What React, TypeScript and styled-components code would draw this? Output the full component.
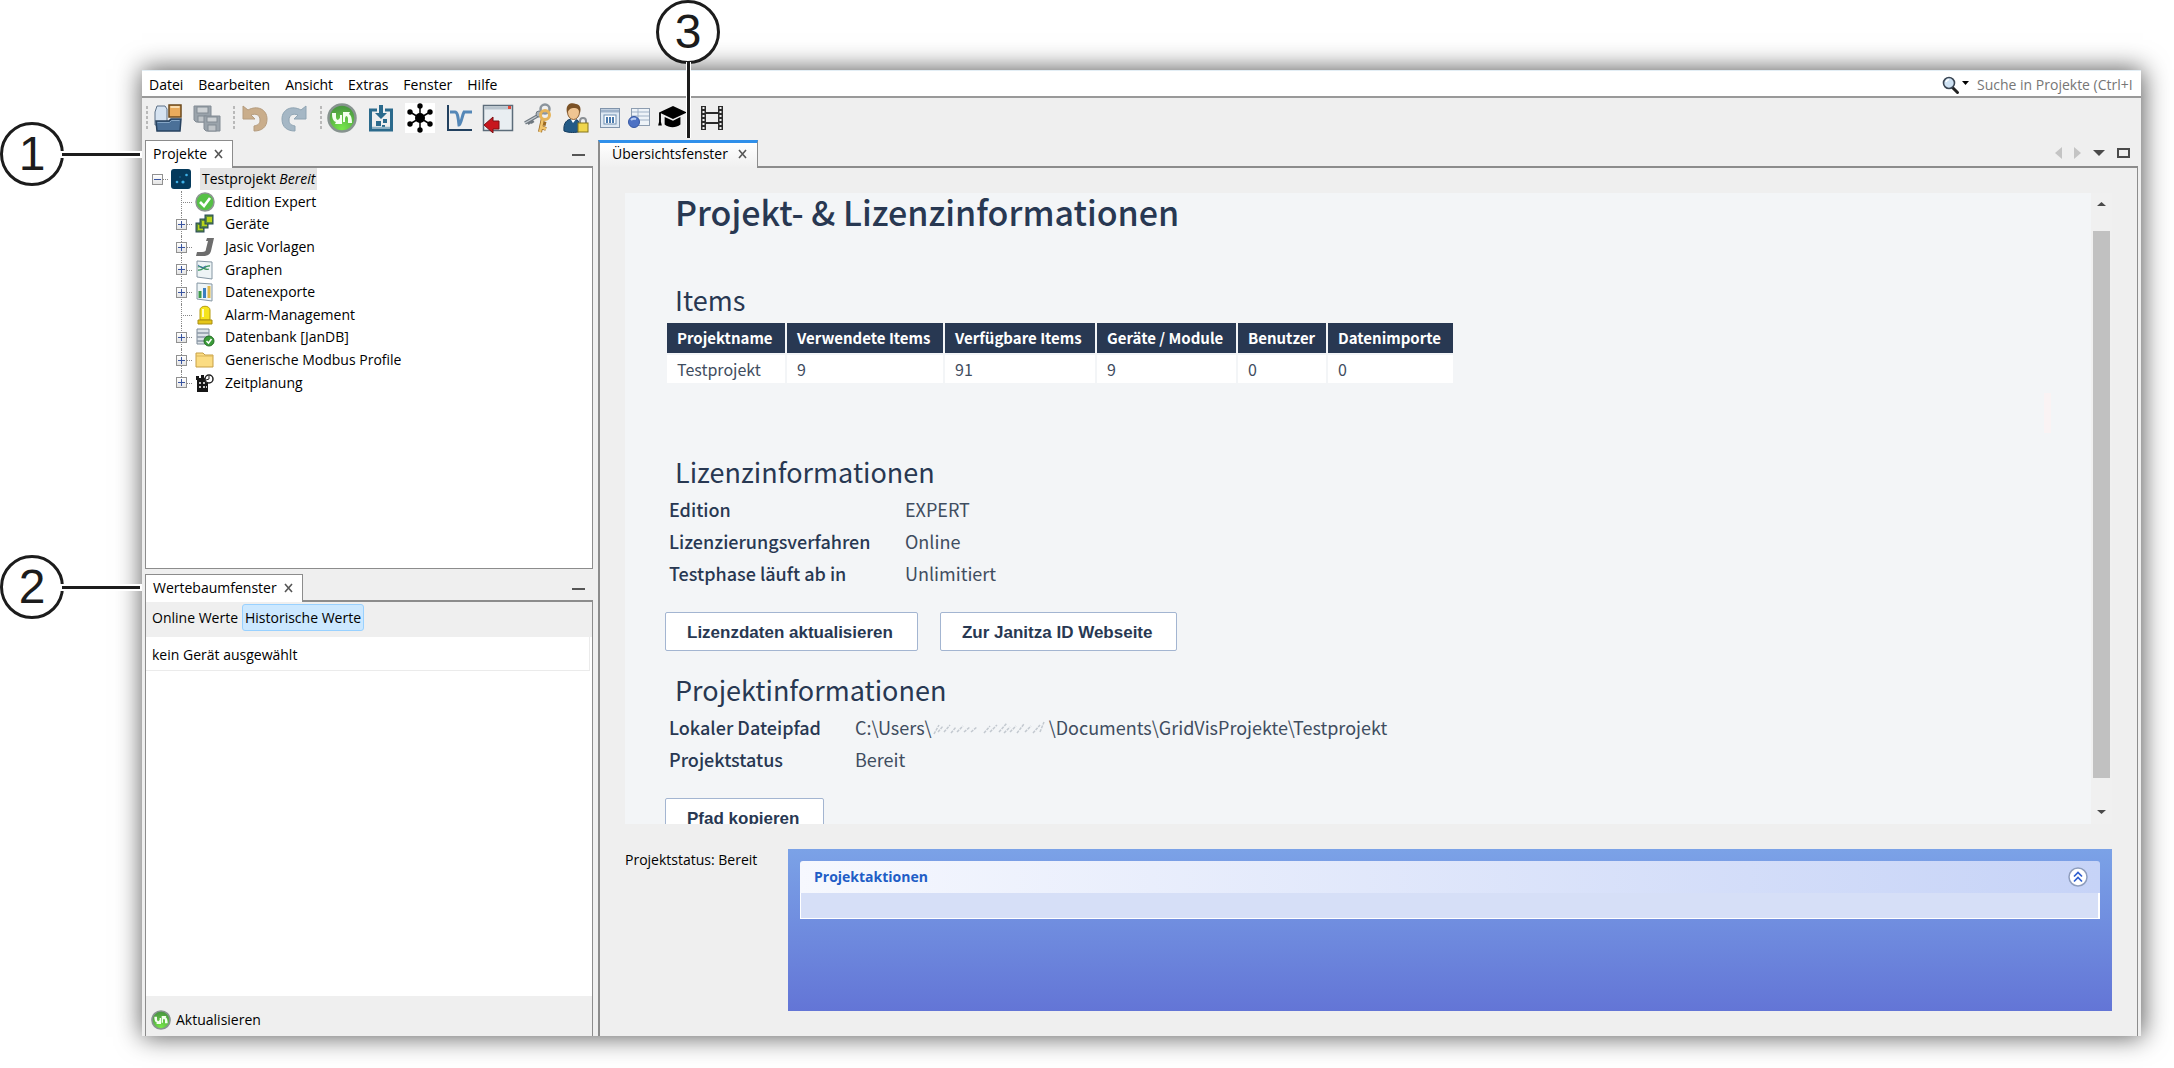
import React from "react";
import styled, { createGlobalStyle, css } from "styled-components";

const ui = `"Open Sans", "Noto Sans", sans-serif`;
const doc = `"Noto Sans CJK SC", "Noto Sans", sans-serif`;
const navy = "#283852";
const line = "#8c8c8c";
const face = "#efefef";

const Global = createGlobalStyle`
  *, *::before, *::after { box-sizing: border-box; }
  body { margin: 0; background: #fff; color: #000; font: 14px/20px ${ui}; }
  button { font: inherit; color: inherit; background: none; border: 0; padding: 0; margin: 0; cursor: pointer; }
  h1, h2, dl, dd, ul { margin: 0; padding: 0; }
  svg { display: block; flex: none; }
`;

/* ---------- frame ---------- */

const Stage = styled.div`
  position: relative;
  display: flex;
  min-height: 100vh;
  padding: 70px 33px 32px 142px;
`;
const Win = styled.div`
  flex: 1;
  min-width: 0;
  display: flex;
  flex-direction: column;
  background: ${face};
  box-shadow: 1px 0 24px 1px rgba(0, 0, 0, 0.65);
`;
const MenuBar = styled.header`
  display: flex;
  align-items: center;
  height: 28px;
  padding-top: 2px;
  background: #fff;
  border-top: 1px solid #e3eef5;
  border-bottom: 2px solid #999;
`;
const Menu = styled.nav`
  display: flex;
  gap: 15px;
  padding-left: 7px;
  flex: 1;
`;
const Search = styled.label`
  display: flex;
  align-items: center;
  gap: 2px;
`;
const SearchInput = styled.input`
  width: 170px;
  padding: 0 0 0 6px;
  border: 0;
  outline: 0;
  background: transparent;
  font: 14px/20px ${ui};
  &::placeholder { color: #767676; opacity: 1; }
`;
const Toolbar = styled.div`
  display: flex;
  align-items: center;
  height: 42px;
  padding: 0 0 2px 4px;
`;
const Grip = styled.span`
  width: 2px;
  height: 24px;
  background: repeating-linear-gradient(#b9b9b9 0 3px, transparent 3px 5px);
  &:not(:first-child) { margin-left: 7px; }
`;
const Tool = styled.button<{ $w?: number }>`
  width: ${(p) => p.$w ?? 39}px;
  height: 34px;
  display: flex;
  align-items: center;
  justify-content: center;
`;
const Body = styled.div`
  flex: 1;
  display: flex;
  gap: 5px;
  padding: 0 3px;
`;

/* ---------- docked panels ---------- */

const Side = styled.aside`
  width: 448px;
  display: flex;
  flex-direction: column;
  gap: 5px;
`;
const Panel = styled.section<{ $grow: number }>`
  flex: ${(p) => p.$grow} 1 0;
  display: flex;
  flex-direction: column;
`;
const TabStrip = styled.div`
  display: flex;
  height: 28px;
`;
const Tab = styled.div<{ $active?: boolean }>`
  display: flex;
  align-items: center;
  gap: 7px;
  padding: 0 8px 2px 7px;
  background: #fff;
  border: solid ${line};
  border-width: 1px 1px 0 1px;
  ${(p) =>
    p.$active &&
    css`
      gap: 10px;
      padding: 0 9px 4px 12px;
      background: linear-gradient(#fff, ${face});
      border-top: 3px solid #2f8fea;
      border-left-width: 2px;
    `}
`;
const StripTail = styled.div<{ $gap: number }>`
  flex: 1;
  display: flex;
  align-items: center;
  justify-content: flex-end;
  gap: ${(p) => p.$gap}px;
  padding-right: 8px;
  border-bottom: 2px solid ${line};
`;
const PanelBody = styled.div<{ $closed?: boolean }>`
  flex: 1;
  display: flex;
  flex-direction: column;
  background: #fff;
  border: solid ${line};
  border-width: 0 1px ${(p) => (p.$closed ? 1 : 0)}px 1px;
`;

/* ---------- project tree ---------- */

const Tree = styled.ul`
  display: grid;
  grid-auto-rows: 1fr;
  height: 226px;
  list-style: none;
`;
const Node = styled.li<{ $root?: boolean }>`
  display: flex;
  align-items: center;
  padding-left: ${(p) => (p.$root ? 5 : 29)}px;
`;
const Twig = styled.span<{ $root?: boolean }>`
  position: relative;
  align-self: stretch;
  display: flex;
  align-items: center;
  width: 20px;
  &::before {
    content: "";
    position: absolute;
    left: 6px;
    right: 3px;
    top: 50%;
    border-top: 1px dotted #888;
  }
  ${(p) =>
    !p.$root &&
    css`
      &::after {
        content: "";
        position: absolute;
        left: 6px;
        top: 0;
        bottom: 0;
        border-left: 1px dotted #888;
      }
      li:last-child > &::after { bottom: 50%; }
    `}
`;
const Expander = styled.button<{ $open?: boolean }>`
  position: relative;
  z-index: 1;
  width: 11px;
  height: 11px;
  margin-left: 1px;
  border: 1px solid #919191;
  background:
    linear-gradient(#3a55a0, #3a55a0) center / 7px 1px no-repeat,
    linear-gradient(#3a55a0, #3a55a0) center / 1px ${(p) => (p.$open ? 0 : 7)}px no-repeat,
    linear-gradient(#fff, #e4e4e4);
`;
const NodeLabel = styled.span<{ $selected?: boolean }>`
  margin-left: ${(p) => (p.$selected ? 9 : 8)}px;
  padding: 0 2px;
  line-height: 22px;
  background: ${(p) => (p.$selected ? "#e4e4e4" : "none")};
`;

/* ---------- value tree ---------- */

const Switcher = styled.div`
  display: flex;
  align-items: flex-start;
  gap: 3px;
  height: 35px;
  padding: 2px 5px;
  background: ${face};
`;
const Choice = styled.button<{ $on?: boolean }>`
  height: 27px;
  padding: 0 ${(p) => (p.$on ? 2 : 0)}px;
  border: 1px solid ${(p) => (p.$on ? "#99d1ff" : "transparent")};
  border-radius: 3px;
  background: ${(p) => (p.$on ? "#cce8ff" : "none")};
`;
const Empty = styled.div`
  height: 34px;
  margin-right: 2px;
  padding: 8px 6px;
  line-height: 20px;
  border: solid #ebebeb;
  border-width: 0 1px 1px 0;
`;
const Footer = styled.footer`
  margin-top: auto;
  display: flex;
  align-items: center;
  height: 40px;
  padding: 8px 5px 0;
  background: ${face};
`;
const Refresh = styled.button`
  display: flex;
  align-items: center;
  gap: 5px;
`;

/* ---------- editor ---------- */

const Editor = styled.main`
  flex: 1;
  min-width: 0;
  display: flex;
  flex-direction: column;
`;
const EditorBody = styled.div`
  flex: 1;
  display: flex;
  flex-direction: column;
  gap: 25px;
  padding: 25px;
  border: solid ${line};
  border-width: 0 1px 0 2px;
`;
const Viewport = styled.div`
  flex: 1 1 0;
  min-height: 0;
  display: flex;
`;
const Paper = styled.div`
  position: relative;
  flex: 1;
  overflow: hidden;
  padding: 0 40px;
  background: #f3f5f7;
  color: ${navy};
  font: 18px/32px ${doc};
`;
const Title = styled.h1`
  padding-left: 10px;
  font: 500 34px/38px ${doc};
`;
const Section = styled.section<{ $top: number }>`
  margin-top: ${(p) => p.$top}px;
`;
const Heading = styled.h2`
  padding-left: 10px;
  font: 400 27px/36px ${doc};
`;
const Items = styled.table`
  margin: 3px 0 0 0;
  table-layout: fixed;
  width: 790px;
  border-spacing: 2px;
  text-align: left;
`;
const Th = styled.th<{ $w: number }>`
  width: ${(p) => p.$w}px;
  height: 30px;
  padding: 0 10px;
  background: ${navy};
  color: #fff;
  font: 700 15px/22px ${doc};
  white-space: nowrap;
`;
const Td = styled.td`
  height: 28px;
  padding: 0 10px;
  background: #fff;
  color: #3f4d60;
  font: 400 16px/22px ${doc};
`;
const Facts = styled.dl<{ $label: number }>`
  display: grid;
  grid-template-columns: ${(p) => p.$label}px 1fr;
  padding: 3px 0 0 4px;
  dt { font-weight: 500; }
  dd { display: flex; color: #3f4d60; padding-top: 1px; line-height: 31px; }
`;
const Actions = styled.div`
  display: flex;
  gap: 22px;
  padding-top: 23px;
`;
const Action = styled.button`
  height: 39px;
  padding: 2px 24px 0 21px;
  border: 1px solid #a3b5d1;
  border-radius: 2px;
  background: #fff;
  color: ${navy};
  font: 700 17px/20px "Liberation Sans", Arial, sans-serif;
`;
const Mark = styled.i`
  position: absolute;
  top: 200px;
  right: 40px;
  width: 7px;
  height: 40px;
  background: #faf3f4;
`;
const ScrollTrack = styled.div`
  width: 21px;
  display: flex;
  flex-direction: column;
  align-items: center;
  background: #f0f0f0;
`;
const ScrollStep = styled.button<{ $h: number; $pad: number }>`
  height: ${(p) => p.$h}px;
  padding-top: ${(p) => p.$pad}px;
  display: flex;
  align-items: flex-start;
`;
const Thumb = styled.div`
  flex: 1;
  width: 17px;
  background: #c1c1c1;
`;
const StatusRow = styled.div`
  display: flex;
`;
const StatusText = styled.div`
  width: 163px;
  flex: none;
  padding-top: 1px;
`;
const TaskPane = styled.div`
  flex: 1;
  height: 162px;
  padding: 12px;
  background: linear-gradient(#7ba2e7, #6375d6);
`;
const TaskHead = styled.div`
  display: flex;
  align-items: center;
  justify-content: space-between;
  height: 32px;
  padding: 0 12px 0 14px;
  border-radius: 3px 3px 0 0;
  background: linear-gradient(90deg, #f6f8fe, #c6d3f7);
  color: #215dc6;
  font-weight: 700;
`;
const TaskBody = styled.div`
  height: 26px;
  background: #d6dff7;
  border: solid #fff;
  border-width: 0 2px 1px 1px;
`;

/* ---------- callouts laid over the window ---------- */

const Callout = styled.div<{ $x: number; $y: number }>`
  position: absolute;
  left: ${(p) => p.$x}px;
  top: ${(p) => p.$y}px;
  width: 64px;
  height: 64px;
  display: flex;
  align-items: center;
  justify-content: center;
  border: 3px solid #1c1c1c;
  border-radius: 50%;
  background: #fff;
  color: #1c1c1c;
  font: 48px/58px "Liberation Sans", Arial, sans-serif;
`;
const Leader = styled.span<{ $down?: boolean }>`
  position: absolute;
  background: #1c1c1c;
  box-shadow: 0 0 0 2px #fff;
  ${(p) =>
    p.$down
      ? css`
          left: 28px;
          top: 59px;
          width: 3px;
          height: 76px;
          box-shadow: -1px 0 #fff, 1px 0 #fff;
        `
      : css`
          left: 59px;
          top: 28px;
          width: 78px;
          height: 3px;
        `}
`;

/* ---------- drawings ---------- */

const Cross = () => (
  <svg width="10" height="10" viewBox="0 0 10 10"><path d="M1 1l7 8M8 1L1 9" stroke="#555" strokeWidth="1.6" /></svg>
);
const Dash = () => (
  <svg width="13" height="14" viewBox="0 0 13 14"><path d="M0 9h13" stroke="#555" strokeWidth="2" /></svg>
);
const Tri = ({ d, w, h, c = "#4a4a4a" }: { d: string; w: number; h: number; c?: string }) => (
  <svg width={w} height={h} viewBox={`0 0 ${w} ${h}`}><path d={d} fill={c} /></svg>
);
const MaxBox = () => (
  <svg width="13" height="10" viewBox="0 0 13 10"><rect x="1" y="1" width="11" height="8" fill="none" stroke="#4a4a4a" strokeWidth="2" /></svg>
);
const Glass = () => (
  <svg width="18" height="20" viewBox="0 0 18 20">
    <path d="M10.500 12.500l5 5" stroke="#222" strokeWidth="3" strokeLinecap="round" />
    <circle cx="7" cy="8" r="5.500" fill="#cfe2f3" stroke="#3b4654" strokeWidth="1.600" />
    <path d="M4 7a3.500 3.500 0 0 1 3-2.500" stroke="#fff" strokeWidth="1.500" fill="none" />
  </svg>
);
const RefreshBall = ({ size }: { size: number }) => (
  <svg width={size} height={size} viewBox="0 0 30 30">
    <defs>
      <radialGradient id={`ball${size}`} cx="50%" cy="90%" r="80%">
        <stop offset="0" stopColor="#77e84a" /><stop offset="1" stopColor="#4a9a40" />
      </radialGradient>
    </defs>
    <circle cx="15" cy="15" r="13.500" fill={`url(#ball${size})`} stroke="#87938f" strokeWidth="2.500" />
    <path d="M5 10h4v4c0 2 1 3 2 3l2-2v-3l2 0v9H8l1-2c-3-1-4-4-4-9z" fill="#f4fff0" />
    <path d="M25 20h-4v-4c0-2-1-3-2-3l-1 2v4h-2V9h7l-1 2c2 1 3 4 3 9z" fill="#f4fff0" />
  </svg>
);
const OpenProject = () => (
  <svg width="30" height="30" viewBox="0 0 30 30">
    <path d="M2 9l2-6h8l2 3v16H2z" fill="#d6e3f1" stroke="#5d7187" />
    <rect x="16" y="2" width="12" height="12" fill="#e9ab5c" stroke="#6c4a1d" strokeWidth="1.500" />
    <path d="M17.500 4h9" stroke="#f9dcae" strokeWidth="2" />
    <path d="M3 18h13l2-2h10l-1 12H4z" fill="#4b7098" stroke="#27425f" strokeWidth="1.500" />
    <path d="M4.500 19.500h12l2-2h8" stroke="#86a6c6" fill="none" />
  </svg>
);
const SaveAll = () => (
  <svg width="30" height="30" viewBox="0 0 30 30" fill="#9aa3ab" stroke="#828b94">
    <path d="M2 3h17v16H4l-2-2z" />
    <rect x="5" y="4" width="11" height="6" fill="#cdd1d4" /><rect x="6" y="13" width="8" height="6" fill="#bfc4c8" />
    <path d="M12 13h16v15H14l-2-2z" />
    <rect x="15" y="14" width="10" height="5" fill="#cdd1d4" /><rect x="16" y="22" width="8" height="6" fill="#bfc4c8" />
  </svg>
);
const Turn = ({ back }: { back?: boolean }) => (
  <svg width="28" height="28" viewBox="0 0 28 28">
    <path
      d={back
        ? "M2 2v13h12l-4-4c5-2 9 0 9 5 0 4-2 5-6 6v5c8 0 13-4 13-12 0-10-10-14-19-9z"
        : "M26 2v13H14l4-4c-5-2-9 0-9 5 0 4 2 5 6 6v5C7 27 2 23 2 15 2 5 12 1 21 6z"}
      fill={back ? "#c9ad8b" : "#a5b7c5"} stroke={back ? "#b59c7e" : "#8fa4b3"} />
  </svg>
);
const Download = () => (
  <svg width="26" height="28" viewBox="0 0 26 28">
    <path d="M9 6H2.500v20h21V6H17" fill="none" stroke="#2b6a8c" strokeWidth="3" />
    <path d="M11 1h4v8h4l-6 6-6-6h4z" fill="#2b6a8c" />
    <rect x="8" y="17" width="5" height="5" fill="#2b6a8c" /><rect x="15" y="15" width="4" height="4" fill="#2b6a8c" />
    <rect x="14" y="21" width="3" height="3" fill="#2b6a8c" /><path d="M4 23.500h18" stroke="#8fb3c6" strokeWidth="1.500" />
  </svg>
);
const Network = () => (
  <svg width="30" height="30" viewBox="0 0 30 30">
    <rect width="30" height="30" fill="#fff" />
    <path d="M15 3v24M5 9l20 12M25 9L5 21" stroke="#000" strokeWidth="1.500" />
    <circle cx="15" cy="15" r="5" />
    {[[15, 3], [15, 27], [5, 9], [25, 9], [5, 21], [25, 21]].map(([x, y]) => <circle key={`${x}-${y}`} cx={x} cy={y} r="2.700" />)}
  </svg>
);
const Graph = () => (
  <svg width="26" height="28" viewBox="0 0 26 28">
    <path d="M2 1v25h24" fill="none" stroke="#22405f" strokeWidth="2" />
    <path d="M4 8h5c2 0 3 3 4 13 2 0 3-9 5-13M17 8h9" fill="none" stroke="#5487b7" strokeWidth="3" />
  </svg>
);
const WindowIn = () => (
  <svg width="32" height="30" viewBox="0 0 32 30">
    <rect x="1.500" y="2.500" width="29" height="25" fill="#e9eef2" stroke="#5c6c7a" strokeWidth="1.500" />
    <path d="M2 5h28" stroke="#b9c4cd" strokeWidth="3" /><rect x="26" y="3" width="3" height="3" fill="#e04838" />
    <path d="M2 22l9-8v4h6v8h-6v4z" fill="#c8161d" stroke="#7d1014" />
  </svg>
);
const Keys = () => (
  <svg width="30" height="30" viewBox="0 0 30 30">
    <path d="M17 12L3 20M6 18l2 3M9 17l2 3" stroke="#6f7880" strokeWidth="3.500" />
    <path d="M17 12L3 20" stroke="#c5ccd2" strokeWidth="1.200" />
    <circle cx="23" cy="6" r="4.500" fill="none" stroke="#8b949c" strokeWidth="2.500" />
    <circle cx="17" cy="11" r="3" fill="#a9b1b8" stroke="#6f7880" />
    <path d="M21 15l-3 14M19 24l5 2M20 20l4 1" stroke="#9c6a22" strokeWidth="4" />
    <path d="M21 15l-3 14M19 24l5 2" stroke="#f2c56c" strokeWidth="2.500" />
    <circle cx="23" cy="12" r="4.500" fill="none" stroke="#e6b45a" strokeWidth="3" />
  </svg>
);
const UserLock = () => (
  <svg width="28" height="30" viewBox="0 0 28 30">
    <path d="M2 28c-1-8 3-12 8-12 7 0 10 4 9 12-5 2-12 2-17 0z" fill="#235a86" stroke="#153c5e" />
    <path d="M8 15l3 5 4-5z" fill="#fff" />
    <ellipse cx="11.500" cy="9" rx="6" ry="7.500" fill="#f0c592" stroke="#8a5f34" />
    <path d="M5 10C3 1 9-1 14 1c5 1 5 5 4 9-1-4-3-5-6-5s-5 1-7 5z" fill="#7b5226" />
    <path d="M18 20v-2a3 3 0 0 1 6 0v2" fill="none" stroke="#8a8f94" strokeWidth="2" />
    <rect x="16" y="20" width="10" height="9" fill="#f0d64c" stroke="#85741a" />
  </svg>
);
const MiniWindow = () => (
  <svg width="20" height="22" viewBox="0 0 20 22">
    <rect x="0.500" y="1.500" width="19" height="19" fill="#dfe9f3" stroke="#8094ab" />
    <path d="M1 4h18" stroke="#9fb3ca" strokeWidth="3" /><rect x="4" y="8" width="12" height="9" fill="#fff" stroke="#6f8fb1" />
    <path d="M7 10v6M10 10v6M13 10v6" stroke="#4a7aac" strokeWidth="2" />
  </svg>
);
const TableBall = () => (
  <svg width="22" height="22" viewBox="0 0 22 22">
    <rect x="3.500" y="1.500" width="18" height="17" fill="#eef3f8" stroke="#8d9db0" />
    <path d="M4 5h17M4 9h17M4 13h17M10 2v16" stroke="#9fb1c6" />
    <circle cx="6" cy="15" r="5.500" fill="#4d72c4" stroke="#3557a3" /><path d="M3 13a4 3 0 0 1 5-1" stroke="#b9ccf3" strokeWidth="2" fill="none" />
  </svg>
);
const Cap = () => (
  <svg width="30" height="26" viewBox="0 0 32 28">
    <path d="M16 1l15 7-15 7L3 9v9l1 4H0l1-4V8z" /><path d="M7 13l9 4 8-4v8c-5 4-12 4-17 0z" />
  </svg>
);
const Film = () => (
  <svg width="24" height="26" viewBox="0 0 24 26">
    <path d="M3.500 1v24M20.500 1v24" stroke="#2b2b2b" strokeWidth="5" />
    <path d="M3.500 2v22M20.500 2v22" stroke="#efefef" strokeWidth="2" strokeDasharray="2 2" />
    <path d="M5 8h14M5 18h14" stroke="#2b2b2b" strokeWidth="2" />
  </svg>
);
const UserName = () => (
  <svg width="117" height="31" viewBox="0 0 117 31">
    <path
      d="M2 22l5-9M6 20l5-6M12 20l6-7M19 21l5-6M25 20l6-6M32 20l6-5M39 20l6-5M52 21l6-7M58 20l7-7M67 20l8-9M72 21l6-6M78 20l6-6M85 21l7-9M93 20l6-6M101 21l7-8M108 20l4-10"
      stroke="#c3c9d0" strokeWidth="1.500" strokeDasharray="3 1" />
  </svg>
);

const G = ({ children }: { children: React.ReactNode }) => <svg width="20" height="20" viewBox="0 0 20 20">{children}</svg>;
const RootIcon = () => (
  <G>
    <rect width="20" height="20" rx="3" fill="#053a5c" />
    <circle cx="15.500" cy="6" r="1.300" fill="#3fb0e6" /><circle cx="6" cy="13" r="1.300" fill="#3fb0e6" />
    <circle cx="12" cy="13" r="1.600" fill="#3fb0e6" /><circle cx="9" cy="8" r="0.800" fill="#1b6d9c" />
  </G>
);
const Check = () => (
  <G>
    <circle cx="10" cy="10" r="9" fill="#56c146" stroke="#8b9690" strokeWidth="1.500" />
    <path d="M5 10l4 4 6-8" fill="none" stroke="#fff" strokeWidth="2.600" />
  </G>
);
const Devices = () => (
  <G>
    {[[1, 9], [5, 5], [10, 1]].map(([x, y]) => (
      <g key={x}><rect x={x} y={y} width="8" height="9" fill="#5c8a3a" stroke="#24485a" /><rect x={x + 2} y={y + 2} width="5" height="5" fill="#b9d51c" /></g>
    ))}
  </G>
);
const Jasic = () => (
  <G><path d="M12 1h7l-3 13c-1 4-4 5-8 5H1l1-4h5c3 0 4-1 4-3l2-8h-2z" fill="#6d6d6d" /></G>
);
const Sheet = () => <path d="M2 1l15 1v17L2 17z" fill="#eef4f6" stroke="#8496a3" />;
const Graphs = () => (
  <G><Sheet /><path d="M3 7c4-2 6 4 11 2M3 10c5 1 7-5 12-4" fill="none" stroke="#37945a" strokeWidth="1.300" /><path d="M3 5l4 3 4-2" stroke="#3a70a8" fill="none" /></G>
);
const Exports = () => (
  <G><Sheet /><path d="M5 9v7" stroke="#3c9a4a" strokeWidth="3" /><path d="M9.500 6v10" stroke="#3c7fc0" strokeWidth="3" /><path d="M14 4v12" stroke="#e0b84a" strokeWidth="3" /></G>
);
const Alarm = () => (
  <G>
    <path d="M5 15V5c0-5 10-5 10 0v10z" fill="#f6e41c" stroke="#b59b10" /><path d="M8 4v8" stroke="#fffbc0" strokeWidth="2" />
    <path d="M3 15h14v4H3z" fill="#e5c61a" stroke="#a88d12" />
  </G>
);
const Database = () => (
  <G>
    <path d="M2 2h12v15H2z" fill="#dde3e8" stroke="#7d8b98" /><path d="M2 6h12M2 10h12M2 14h12" stroke="#8c99a6" strokeWidth="1.500" />
    <circle cx="14" cy="14" r="5" fill="#3a9c38" stroke="#256f25" /><path d="M11.500 14l2 2 3-4" stroke="#fff" strokeWidth="1.500" fill="none" />
  </G>
);
const Folder = () => (
  <G><path d="M1 3h7l2 2h8v12H1z" fill="#fbdc82" stroke="#c79f45" /><path d="M1 6h17" stroke="#d9b45a" /></G>
);
const Schedule = () => (
  <G>
    <path d="M2 5h11v14H2zM1 3h3v4H1zM6 2h3v4H6z" fill="#161616" /><path d="M4 10h2M8 10h2M4 14h2M8 14h2M11 14h1" stroke="#fff" strokeWidth="1.600" />
    <circle cx="14" cy="6" r="4" fill="#fff" stroke="#222" strokeWidth="1.500" /><path d="M14 3v3l-3 1" stroke="#222" fill="none" />
  </G>
);
const Collapse = () => (
  <svg width="20" height="20" viewBox="0 0 20 20">
    <circle cx="10" cy="10" r="9" fill="#fff" stroke="#8e9dbd" strokeWidth="1.500" />
    <path d="M6 9.500l4-4 4 4M6 14.500l4-4 4 4" fill="none" stroke="#2f5fd0" strokeWidth="1.700" />
  </svg>
);

/* ---------- content ---------- */

const menus = ["Datei", "Bearbeiten", "Ansicht", "Extras", "Fenster", "Hilfe"];

const nodes: { label: string; icon: React.ReactNode; leaf?: boolean }[] = [
  { label: "Edition Expert", icon: <Check />, leaf: true },
  { label: "Geräte", icon: <Devices /> },
  { label: "Jasic Vorlagen", icon: <Jasic /> },
  { label: "Graphen", icon: <Graphs /> },
  { label: "Datenexporte", icon: <Exports /> },
  { label: "Alarm-Management", icon: <Alarm />, leaf: true },
  { label: "Datenbank [JanDB]", icon: <Database /> },
  { label: "Generische Modbus Profile", icon: <Folder /> },
  { label: "Zeitplanung", icon: <Schedule /> },
];

const items: [string, string, number][] = [
  ["Projektname", "Testprojekt", 118],
  ["Verwendete Items", "9", 156],
  ["Verfügbare Items", "91", 150],
  ["Geräte / Module", "9", 139],
  ["Benutzer", "0", 88],
  ["Datenimporte", "0", 125],
];

const tools: [string, React.ReactNode, number?][] = [
  ["Aktualisieren", <RefreshBall size={30} />],
  ["Importieren", <Download />],
  ["Topologie", <Network />],
  ["Graph", <Graph />],
  ["Fenster zurücksetzen", <WindowIn />],
  ["Schlüssel", <Keys />],
  ["Benutzer", <UserLock />],
  ["Berichte", <MiniWindow />, 29],
  ["Tabelle", <TableBall />, 29],
  ["Lernen", <Cap />],
  ["Videos", <Film />],
];

export default function App() {
  return (
    <>
      <Global />
      <Stage>
        <Win>
          <MenuBar>
            <Menu>{menus.map((m) => <button key={m}>{m}</button>)}</Menu>
            <Search>
              <Glass />
              <Tri d="M0 0h7L3.500 4z" w={7} h={8} c="#000" />
              <SearchInput type="text" aria-label="Suche" placeholder="Suche in Projekte (Ctrl+I" />
            </Search>
          </MenuBar>
          <Toolbar>
            <Grip />
            <Tool aria-label="Projekt öffnen"><OpenProject /></Tool>
            <Tool aria-label="Alles speichern"><SaveAll /></Tool>
            <Grip />
            <Tool aria-label="Rückgängig"><Turn back /></Tool>
            <Tool aria-label="Wiederholen"><Turn /></Tool>
            <Grip />
            {tools.map(([name, icon, w]) => <Tool key={name} aria-label={name} $w={w}>{icon}</Tool>)}
          </Toolbar>
          <Body>
            <Side>
              <Panel $grow={13}>
                <TabStrip>
                  <Tab>Projekte<button aria-label="Projekte schließen"><Cross /></button></Tab>
                  <StripTail $gap={0}><button aria-label="Projekte minimieren"><Dash /></button></StripTail>
                </TabStrip>
                <PanelBody $closed>
                  <Tree>
                    <Node $root>
                      <Twig $root><Expander $open aria-label="Testprojekt zuklappen" /></Twig>
                      <RootIcon />
                      <NodeLabel $selected>Testprojekt <em>Bereit</em></NodeLabel>
                    </Node>
                    {nodes.map((n) => (
                      <Node key={n.label}>
                        <Twig>{!n.leaf && <Expander aria-label={`${n.label} aufklappen`} />}</Twig>
                        {n.icon}
                        <NodeLabel>{n.label}</NodeLabel>
                      </Node>
                    ))}
                  </Tree>
                </PanelBody>
              </Panel>
              <Panel $grow={14}>
                <TabStrip>
                  <Tab>Wertebaumfenster<button aria-label="Wertebaumfenster schließen"><Cross /></button></Tab>
                  <StripTail $gap={0}><button aria-label="Wertebaumfenster minimieren"><Dash /></button></StripTail>
                </TabStrip>
                <PanelBody>
                  <Switcher>
                    <Choice>Online Werte</Choice>
                    <Choice $on>Historische Werte</Choice>
                  </Switcher>
                  <Empty>kein Gerät ausgewählt</Empty>
                  <Footer><Refresh><RefreshBall size={20} />Aktualisieren</Refresh></Footer>
                </PanelBody>
              </Panel>
            </Side>
            <Editor>
              <TabStrip>
                <Tab $active>Übersichtsfenster<button aria-label="Übersichtsfenster schließen"><Cross /></button></Tab>
                <StripTail $gap={12}>
                  <button aria-label="Zurück"><Tri d="M7 0v12L0 6z" w={7} h={12} c="#c4c4c4" /></button>
                  <button aria-label="Vor"><Tri d="M0 0v12l7-6z" w={7} h={12} c="#c4c4c4" /></button>
                  <button aria-label="Fensterliste"><Tri d="M0 0h12L6 6z" w={12} h={7} /></button>
                  <button aria-label="Maximieren"><MaxBox /></button>
                </StripTail>
              </TabStrip>
              <EditorBody>
                <Viewport>
                  <Paper>
                    <Title>Projekt- &amp; Lizenzinformationen</Title>
                    <Section $top={51}>
                      <Heading>Items</Heading>
                      <Items>
                        <thead><tr>{items.map(([h, , w]) => <Th key={h} $w={w}>{h}</Th>)}</tr></thead>
                        <tbody><tr>{items.map(([h, v]) => <Td key={h}>{v}</Td>)}</tr></tbody>
                      </Items>
                    </Section>
                    <Section $top={69}>
                      <Heading>Lizenzinformationen</Heading>
                      <Facts $label={236}>
                        <dt>Edition</dt><dd>EXPERT</dd>
                        <dt>Lizenzierungsverfahren</dt><dd>Online</dd>
                        <dt>Testphase läuft ab in</dt><dd>Unlimitiert</dd>
                      </Facts>
                      <Actions>
                        <Action>Lizenzdaten aktualisieren</Action>
                        <Action>Zur Janitza ID Webseite</Action>
                      </Actions>
                    </Section>
                    <Section $top={21}>
                      <Heading>Projektinformationen</Heading>
                      <Facts $label={186}>
                        <dt>Lokaler Dateipfad</dt><dd>C:\Users\<UserName />\Documents\GridVisProjekte\Testprojekt</dd>
                        <dt>Projektstatus</dt><dd>Bereit</dd>
                      </Facts>
                      <Actions><Action>Pfad kopieren</Action></Actions>
                    </Section>
                    <Mark />
                  </Paper>
                  <ScrollTrack>
                    <ScrollStep $h={38} $pad={9} aria-label="Nach oben"><Tri d="M4.500 0L9 4H0z" w={9} h={4} /></ScrollStep>
                    <Thumb />
                    <ScrollStep $h={46} $pad={32} aria-label="Nach unten"><Tri d="M0 0h9L4.500 4z" w={9} h={4} /></ScrollStep>
                  </ScrollTrack>
                </Viewport>
                <StatusRow>
                  <StatusText>Projektstatus: Bereit</StatusText>
                  <TaskPane>
                    <TaskHead>Projektaktionen<button aria-label="Projektaktionen einklappen"><Collapse /></button></TaskHead>
                    <TaskBody />
                  </TaskPane>
                </StatusRow>
              </EditorBody>
            </Editor>
          </Body>
        </Win>
        <Callout $x={0} $y={122}>1<Leader /></Callout>
        <Callout $x={0} $y={555}>2<Leader /></Callout>
        <Callout $x={656} $y={0}>3<Leader $down /></Callout>
      </Stage>
    </>
  );
}
